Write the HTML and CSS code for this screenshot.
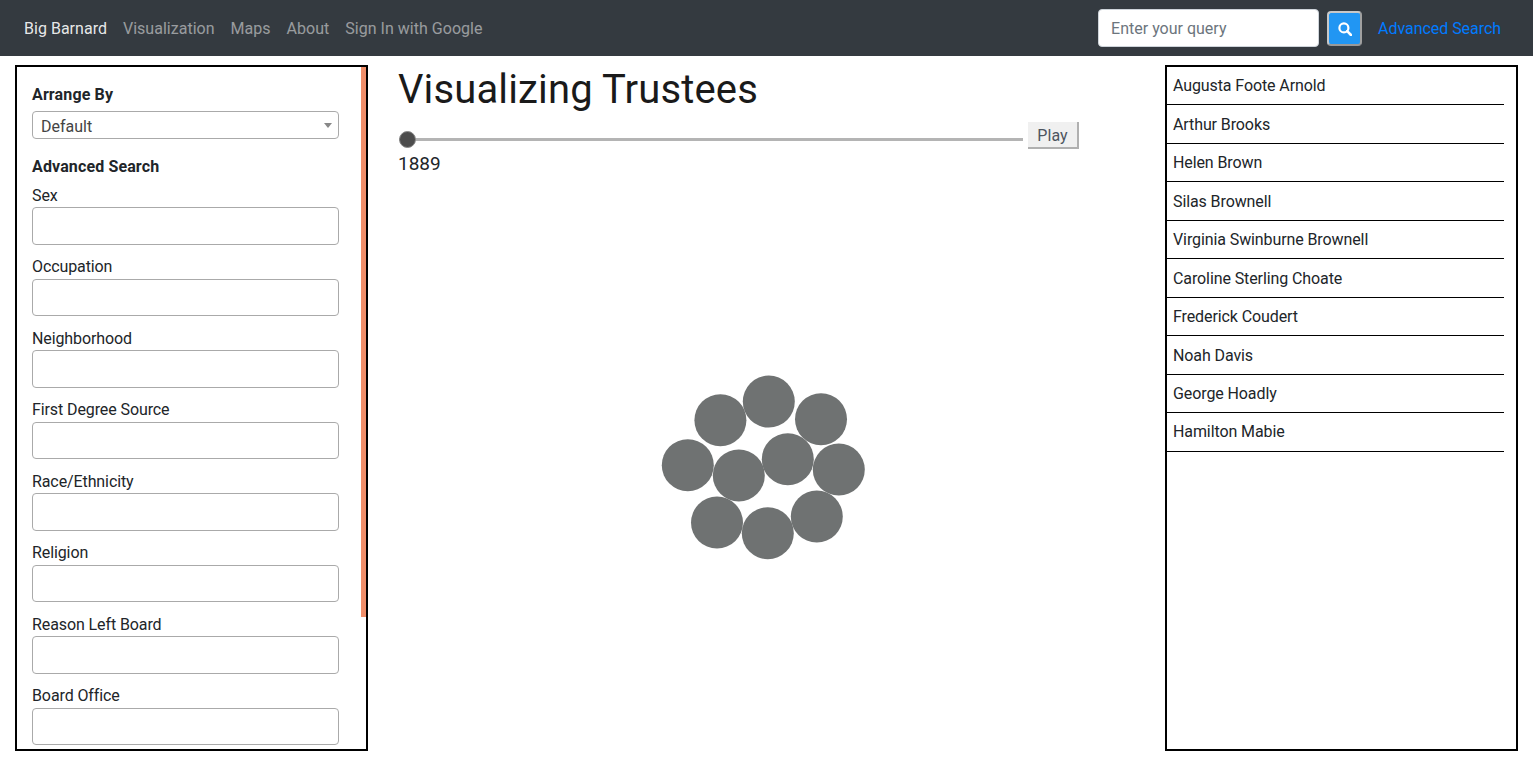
FILE: index.html
```html
<!DOCTYPE html>
<html>
<head>
<title>Visualizing Trustees</title>
<link rel="stylesheet" href="styles.css">
</head>
<body>

<nav class="navbar">
  <a class="brand" href="#">Big Barnard</a>
  <a class="nav-link" href="#">Visualization</a>
  <a class="nav-link" href="#">Maps</a>
  <a class="nav-link" href="#">About</a>
  <a class="nav-link" href="#">Sign In with Google</a>
  <form class="search-form">
    <input class="search-input" type="text" placeholder="Enter your query">
    <button class="search-button" type="button" aria-label="Search">
      <svg width="14" height="14" viewBox="0 0 14 14">
        <circle cx="5.9" cy="5.9" r="4.5" fill="none" stroke="white" stroke-width="2.2"/>
        <path d="M9.2 9.2 L13 13" stroke="white" stroke-width="2.6" stroke-linecap="round"/>
      </svg>
    </button>
    <a class="advanced-link" href="#">Advanced Search</a>
  </form>
</nav>

<div class="main">
  <div class="panel filters">
    <span class="scroll-thumb"></span>
    <div class="section-title">Arrange By</div>
    <div class="select-wrap">
      <select class="arrange-select">
        <option>Default</option>
      </select>
      <span class="select-arrow"></span>
    </div>
    <div class="section-title advanced-title">Advanced Search</div>
    <label class="field-label">Sex</label>
    <input class="field-input" type="text">
    <label class="field-label">Occupation</label>
    <input class="field-input" type="text">
    <label class="field-label">Neighborhood</label>
    <input class="field-input" type="text">
    <label class="field-label">First Degree Source</label>
    <input class="field-input" type="text">
    <label class="field-label">Race/Ethnicity</label>
    <input class="field-input" type="text">
    <label class="field-label">Religion</label>
    <input class="field-input" type="text">
    <label class="field-label">Reason Left Board</label>
    <input class="field-input" type="text">
    <label class="field-label">Board Office</label>
    <input class="field-input" type="text">
  </div>

  <div class="center">
    <h1 class="page-title">Visualizing Trustees</h1>
    <div class="slider-row">
      <input class="year-slider" type="range" min="1889" max="2000" value="1889">
      <button class="play-button" type="button">Play</button>
    </div>
    <div class="year-label">1889</div>
    <svg class="bubbles" width="681" height="573" viewBox="398 177.2 681 573">
      <circle cx="768.8" cy="401.8" r="26"/>
      <circle cx="720.4" cy="420.4" r="26"/>
      <circle cx="821" cy="419.4" r="26"/>
      <circle cx="687.8" cy="465.4" r="26"/>
      <circle cx="738.8" cy="475.6" r="26"/>
      <circle cx="787.8" cy="459.4" r="26"/>
      <circle cx="838.8" cy="469.8" r="26"/>
      <circle cx="717" cy="522.8" r="26"/>
      <circle cx="767.8" cy="533.4" r="26"/>
      <circle cx="816.8" cy="516.8" r="26"/>
    </svg>
  </div>

  <div class="panel names">
    <ul class="name-list">
      <li>Augusta Foote Arnold</li>
      <li>Arthur Brooks</li>
      <li>Helen Brown</li>
      <li>Silas Brownell</li>
      <li>Virginia Swinburne Brownell</li>
      <li>Caroline Sterling Choate</li>
      <li>Frederick Coudert</li>
      <li>Noah Davis</li>
      <li>George Hoadly</li>
      <li>Hamilton Mabie</li>
    </ul>
  </div>
</div>

</body>
</html>
```

FILE: styles.css
```css
* {
  box-sizing: border-box;
}

body {
  margin: 0;
  font-family: 'Roboto', sans-serif;
  font-size: 16px;
  line-height: 24px;
  color: #212529;
  background-color: white;
}

.navbar {
  display: flex;
  align-items: center;
  gap: 16px;
  height: 56px;
  padding: 0 32px 0 24px;
  background-color: #343a40;
  letter-spacing: 0.02px;
}

.brand {
  padding-top: 1px;
  color: rgba(255, 255, 255, 0.9);
  text-decoration: none;
}

.nav-link {
  padding-top: 1px;
  color: rgba(255, 255, 255, 0.5);
  text-decoration: none;
}

.search-form {
  display: flex;
  align-items: center;
  margin-left: auto;
}

.search-input {
  width: 221px;
  height: 38px;
  padding: 6px 12px;
  border: 1px solid #ced4da;
  border-radius: 4px;
  font-family: inherit;
  font-size: 16px;
  color: #495057;
}

.search-input::placeholder {
  color: #6c757d;
}

.search-button {
  display: flex;
  align-items: center;
  justify-content: center;
  width: 35px;
  height: 35px;
  margin-top: 1px;
  margin-left: 8px;
  padding: 0;
  border: 2px solid;
  border-color: #c8c8c8 #a0a0a0 #999999 #c8c8c8;
  border-radius: 4px;
  background-color: #2196f3;
}

.advanced-link {
  margin-left: 16px;
  padding-top: 1px;
  letter-spacing: -0.05px;
  color: #007bff;
  text-decoration: none;
}

.main {
  display: flex;
  padding: 9px 15px 20px;
}

.panel {
  width: 353px;
  height: 686px;
  flex-shrink: 0;
  border: 2px solid black;
  background-color: white;
}

.filters {
  position: relative;
  padding: 15px 27px 0 15px;
  overflow: hidden;
}

.scroll-thumb {
  position: absolute;
  top: 0;
  right: 0;
  width: 5px;
  height: 550px;
  background-color: #f08e6a;
}

.section-title {
  padding-top: 1px;
  height: 24px;
  font-weight: bold;
  letter-spacing: 0.13px;
}

.advanced-title {
  margin-top: 15px;
  margin-bottom: 5px;
}

.select-wrap {
  position: relative;
  margin-top: 5px;
}

.arrange-select {
  display: block;
  width: 100%;
  height: 28px;
  padding: 3px 8px 0;
  border: 1px solid #aaaaaa;
  border-radius: 4px;
  background-color: white;
  font-family: inherit;
  font-size: 16px;
  color: #444444;
  appearance: none;
}

.select-arrow {
  position: absolute;
  top: 12px;
  right: 7px;
  border-top: 5px solid #888888;
  border-left: 4px solid transparent;
  border-right: 4px solid transparent;
}

.field-label {
  display: block;
  height: 24px;
  padding-top: 0.5px;
  letter-spacing: -0.1px;
}

.field-input {
  display: block;
  width: 100%;
  height: 37.5px;
  margin-bottom: 10px;
  border: 1px solid #aaaaaa;
  border-radius: 4px;
  background-color: white;
}

.center {
  flex: 1;
  padding: 0 86px 0 15px;
  margin-left: 15px;
}

.page-title {
  height: 48px;
  margin: 0 0 9px;
  padding-top: 1px;
  font-size: 40px;
  font-weight: 400;
  line-height: 48px;
  letter-spacing: 0.14px;
  color: #1a1a1a;
}

.slider-row {
  display: flex;
  align-items: center;
  height: 27px;
}

.year-slider {
  width: 624px;
  height: 18px;
  margin: 8px 5px 0 1px;
  background: transparent;
  appearance: none;
}

.year-slider::-webkit-slider-runnable-track {
  height: 3px;
  background-color: #b4b4b4;
}

.year-slider::-webkit-slider-thumb {
  width: 17px;
  height: 17px;
  margin-top: -7px;
  border: 1px solid #8a8a8a;
  border-radius: 50%;
  background-color: #4d4d4d;
  appearance: none;
}

.play-button {
  width: 51px;
  height: 27px;
  padding: 1px 0 0;
  border: solid #b0b0b0;
  border-width: 0 2px 2px 0;
  background-color: #f0f0f0;
  font-family: inherit;
  font-size: 16px;
  letter-spacing: 0.1px;
  color: #4d5560;
}

.year-label {
  height: 28px;
  padding-top: 1px;
  font-size: 19px;
  line-height: 27px;
}

.bubbles {
  display: block;
  fill: #6f7272;
}

.names {
  padding-right: 12px;
}

.name-list {
  margin: -0.25px 0 0;
  padding: 0;
  list-style: none;
}

.name-list li {
  height: 38.5px;
  padding: 7.25px 0 0 6px;
  border-bottom: 1px solid black;
  letter-spacing: -0.1px;
  color: #212529;
}

.name-list li:last-child {
  padding-top: 7px;
}
```
